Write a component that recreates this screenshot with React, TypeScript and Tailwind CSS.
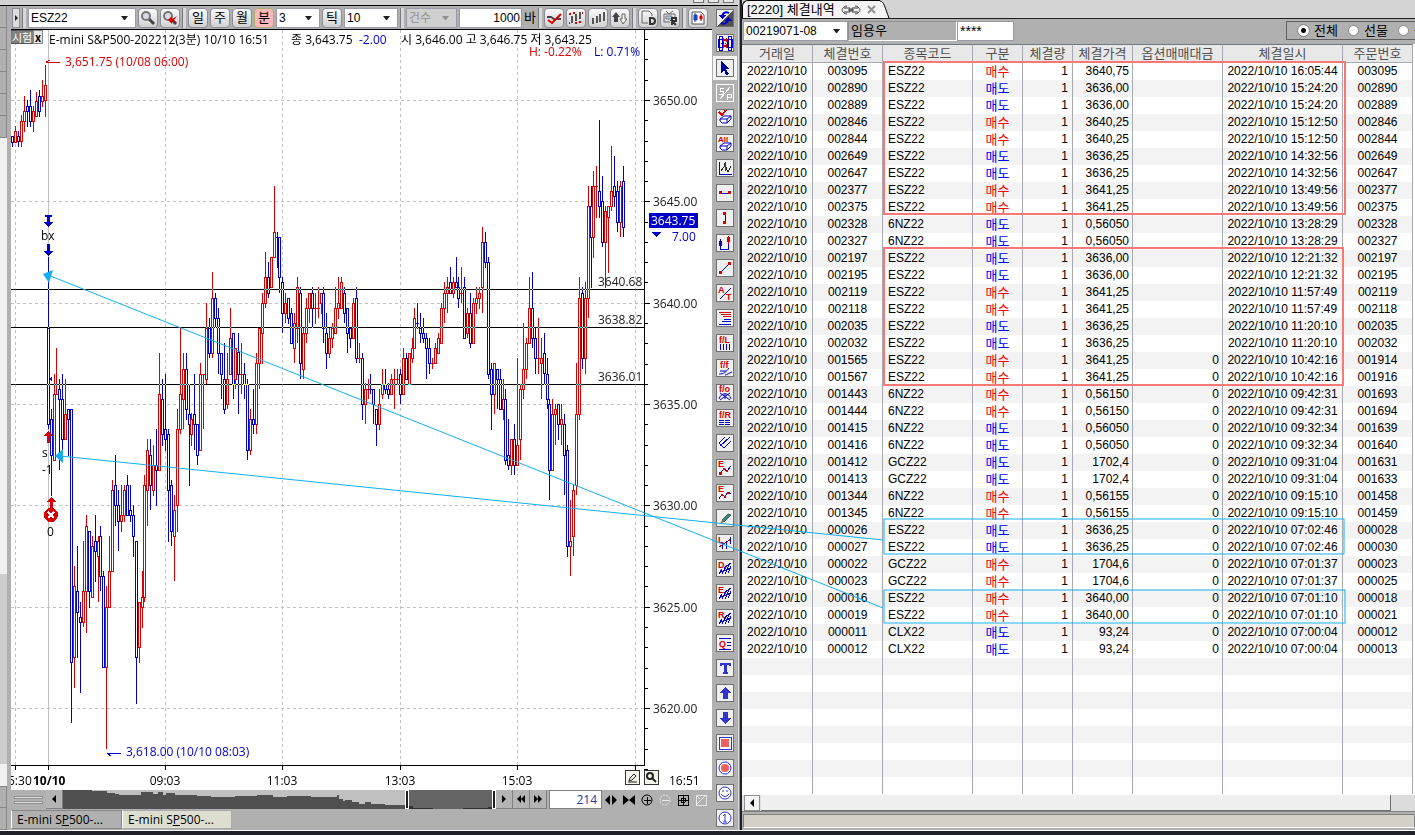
import type { ReactNode } from "react";

const UI_FONT = "font-['Open_Sans','Noto_Sans_CJK_KR',sans-serif]";
const GRID_FONT = "font-['Liberation_Sans','Noto_Sans_CJK_KR',sans-serif]";

const RED = "#d80000";
const BLUE = "#0000c8";
const CYAN = "#14aef0";

type Candle = [x: number, high: number, top: number, bottom: number, low: number, up: 0 | 1];

const candles: Candle[] = [
  [12, 136, 136, 142, 146, 0], [15, 126, 131, 142, 142, 1], [18, 131, 136, 141, 146, 0], [21, 115, 121, 141, 146, 1],
  [24, 96, 111, 121, 131, 1], [27, 100, 106, 111, 126, 0], [30, 90, 106, 121, 126, 0], [33, 106, 111, 121, 131, 1],
  [36, 92, 101, 116, 116, 1], [39, 90, 96, 111, 116, 0], [42, 80, 96, 101, 106, 1], [45, 65, 85, 100, 116, 1],
  [48, 257, 328, 424, 428, 0], [51, 409, 419, 455, 495, 0], [54, 374, 394, 460, 460, 1], [56, 348, 394, 394, 394, 1],
  [59, 379, 389, 399, 469, 0], [62, 374, 399, 439, 451, 0], [65, 379, 414, 439, 439, 1], [68, 409, 409, 419, 455, 0],
  [71, 409, 409, 662, 722, 0], [74, 566, 586, 657, 687, 1], [77, 546, 591, 612, 657, 0], [80, 602, 617, 622, 692, 0],
  [83, 541, 591, 622, 626, 1], [86, 515, 526, 591, 632, 1], [89, 531, 531, 591, 607, 0], [92, 536, 546, 597, 597, 1],
  [95, 515, 541, 551, 581, 0], [98, 536, 541, 556, 601, 1], [100, 526, 536, 576, 590, 0], [103, 571, 576, 667, 667, 0],
  [106, 586, 607, 667, 748, 1], [109, 536, 571, 607, 607, 1], [112, 480, 490, 571, 571, 1], [115, 455, 485, 505, 525, 0],
  [118, 490, 505, 521, 550, 0], [121, 485, 515, 521, 531, 1], [124, 485, 490, 515, 521, 1], [127, 475, 485, 515, 515, 0],
  [130, 485, 510, 515, 521, 0], [133, 505, 515, 536, 556, 0], [136, 541, 541, 657, 703, 0], [139, 602, 602, 647, 662, 1],
  [142, 571, 597, 607, 627, 1], [144, 475, 485, 597, 601, 1], [147, 439, 450, 490, 525, 1], [150, 439, 455, 485, 509, 0],
  [153, 445, 465, 490, 495, 1], [156, 429, 465, 470, 505, 0], [159, 353, 394, 470, 470, 1], [162, 379, 399, 434, 445, 0],
  [165, 374, 429, 439, 450, 0], [168, 429, 434, 490, 541, 0], [171, 480, 485, 531, 545, 0], [174, 495, 510, 536, 580, 1],
  [177, 409, 429, 505, 531, 1], [180, 328, 394, 429, 433, 1], [183, 353, 369, 399, 428, 1], [186, 353, 369, 409, 419, 0],
  [189, 384, 414, 424, 485, 0], [191, 413, 419, 434, 445, 1], [194, 374, 414, 424, 449, 0], [197, 424, 424, 455, 464, 0],
  [200, 363, 374, 450, 450, 1], [203, 374, 374, 374, 428, 1], [206, 303, 328, 379, 383, 1], [209, 318, 328, 353, 357, 0],
  [212, 272, 298, 353, 357, 1], [215, 293, 298, 318, 327, 0], [218, 308, 318, 353, 373, 0], [221, 353, 353, 374, 398, 0],
  [224, 343, 379, 409, 413, 0], [227, 353, 379, 404, 408, 1], [230, 308, 338, 374, 374, 1], [233, 333, 333, 384, 398, 0],
  [235, 348, 348, 379, 388, 1], [238, 333, 352, 374, 413, 0], [241, 343, 374, 374, 393, 1], [244, 363, 374, 384, 398, 0],
  [247, 379, 384, 450, 459, 0], [250, 409, 419, 450, 454, 1], [253, 389, 419, 424, 433, 0], [256, 353, 363, 424, 433, 1],
  [259, 328, 328, 363, 388, 1], [262, 293, 303, 333, 363, 1], [265, 252, 277, 303, 307, 1], [268, 262, 277, 293, 297, 0],
  [271, 257, 257, 287, 287, 1], [274, 186, 232, 257, 257, 1], [277, 232, 237, 237, 267, 0], [279, 237, 237, 277, 292, 0],
  [282, 277, 282, 313, 332, 0], [285, 293, 303, 313, 322, 1], [288, 298, 298, 318, 323, 0], [291, 308, 313, 343, 343, 0],
  [294, 313, 323, 348, 362, 1], [297, 277, 287, 328, 342, 1], [300, 287, 293, 363, 378, 0], [303, 328, 333, 369, 378, 1],
  [306, 298, 308, 333, 342, 1], [309, 293, 293, 308, 322, 1], [312, 287, 293, 308, 327, 0], [315, 293, 308, 308, 323, 1],
  [318, 287, 308, 308, 317, 1], [321, 293, 293, 303, 313, 1], [323, 287, 293, 328, 342, 0], [326, 313, 333, 353, 368, 0],
  [329, 328, 338, 353, 357, 1], [332, 323, 328, 338, 347, 1], [335, 287, 308, 333, 333, 1], [338, 277, 303, 308, 318, 1],
  [341, 277, 282, 308, 308, 1], [344, 287, 293, 313, 322, 0], [347, 308, 308, 333, 352, 0], [350, 328, 328, 338, 347, 0],
  [353, 298, 303, 338, 338, 1], [356, 287, 298, 358, 362, 0], [359, 343, 358, 358, 362, 1], [362, 353, 358, 404, 419, 0],
  [365, 383, 389, 404, 423, 1], [368, 379, 389, 389, 398, 1], [370, 374, 389, 389, 393, 0], [373, 389, 389, 404, 423, 0],
  [376, 409, 409, 424, 445, 0], [379, 389, 404, 424, 429, 1], [382, 369, 384, 394, 398, 1], [385, 369, 384, 389, 393, 0],
  [388, 383, 389, 394, 398, 0], [391, 374, 379, 394, 394, 1], [394, 369, 379, 379, 408, 1], [397, 369, 379, 379, 384, 1],
  [400, 369, 374, 394, 403, 0], [403, 348, 358, 394, 394, 1], [406, 353, 358, 379, 379, 0], [409, 353, 353, 384, 384, 1],
  [412, 338, 348, 358, 362, 1], [414, 308, 318, 348, 348, 1], [417, 303, 323, 323, 328, 0], [420, 313, 328, 333, 342, 0],
  [423, 318, 333, 338, 342, 0], [426, 333, 338, 348, 378, 0], [429, 338, 348, 363, 373, 0], [432, 358, 363, 363, 368, 1],
  [435, 343, 348, 363, 363, 1], [438, 333, 338, 353, 353, 1], [441, 303, 308, 343, 343, 1], [444, 282, 293, 308, 322, 1],
  [447, 277, 287, 293, 312, 1], [450, 267, 282, 293, 293, 0], [453, 277, 282, 293, 297, 1], [456, 257, 282, 287, 287, 0],
  [458, 277, 287, 298, 307, 0], [461, 267, 293, 293, 302, 1], [464, 277, 287, 338, 338, 0], [467, 308, 313, 333, 337, 1],
  [470, 293, 313, 343, 347, 0], [473, 298, 303, 343, 343, 1], [476, 287, 298, 303, 313, 1], [479, 287, 293, 298, 308, 1],
  [482, 227, 242, 287, 312, 1], [485, 232, 242, 262, 267, 0], [488, 257, 262, 374, 378, 0], [491, 363, 369, 394, 429, 0],
  [494, 363, 363, 394, 413, 1], [497, 369, 369, 379, 408, 0], [500, 369, 379, 409, 409, 0], [503, 379, 399, 409, 419, 1],
  [505, 389, 399, 460, 464, 0], [508, 419, 455, 465, 469, 0], [511, 439, 439, 465, 474, 1], [514, 424, 439, 465, 474, 0],
  [517, 358, 445, 465, 465, 1], [520, 384, 389, 439, 459, 1], [523, 323, 369, 389, 398, 1], [526, 338, 343, 369, 378, 1],
  [529, 277, 308, 343, 343, 1], [532, 272, 308, 338, 347, 0], [535, 328, 338, 358, 373, 0], [538, 318, 358, 358, 373, 1],
  [541, 338, 358, 363, 398, 1], [544, 333, 353, 373, 384, 0], [547, 358, 374, 399, 408, 0], [549, 399, 404, 470, 499, 0],
  [552, 399, 414, 470, 470, 1], [555, 404, 409, 414, 444, 1], [558, 404, 404, 424, 439, 0], [561, 404, 419, 424, 444, 1],
  [564, 414, 424, 455, 494, 0], [567, 445, 450, 546, 556, 0], [570, 500, 541, 546, 575, 1], [573, 485, 490, 536, 555, 1],
  [576, 363, 414, 485, 494, 1], [579, 277, 298, 414, 419, 1], [582, 287, 293, 358, 368, 0], [585, 282, 298, 358, 373, 1],
  [588, 186, 206, 298, 317, 1], [591, 186, 206, 237, 287, 0], [593, 171, 186, 237, 257, 1], [596, 166, 186, 186, 217, 1],
  [599, 120, 191, 206, 217, 0], [602, 176, 201, 242, 246, 0], [605, 206, 211, 242, 287, 1], [608, 206, 206, 217, 272, 1],
  [611, 146, 191, 206, 210, 1], [614, 156, 186, 196, 206, 0], [617, 181, 191, 222, 231, 0], [620, 181, 186, 222, 236, 1],
  [623, 166, 181, 227, 236, 0],
];

type Fill = [no: string, code: string, side: "B" | "S", price: string, option: string, time: string, order: string];

const fills: Fill[] = [
  ["003095", "ESZ22", "B", "3640,75", "", "16:05:44", "003095"],
  ["002890", "ESZ22", "S", "3636,00", "", "15:24:20", "002890"],
  ["002889", "ESZ22", "S", "3636,00", "", "15:24:20", "002889"],
  ["002846", "ESZ22", "B", "3640,25", "", "15:12:50", "002846"],
  ["002844", "ESZ22", "B", "3640,25", "", "15:12:50", "002844"],
  ["002649", "ESZ22", "S", "3636,25", "", "14:32:56", "002649"],
  ["002647", "ESZ22", "S", "3636,25", "", "14:32:56", "002647"],
  ["002377", "ESZ22", "B", "3641,25", "", "13:49:56", "002377"],
  ["002375", "ESZ22", "B", "3641,25", "", "13:49:56", "002375"],
  ["002328", "6NZ22", "S", "0,56050", "", "13:28:29", "002328"],
  ["002327", "6NZ22", "S", "0,56050", "", "13:28:29", "002327"],
  ["002197", "ESZ22", "S", "3636,00", "", "12:21:32", "002197"],
  ["002195", "ESZ22", "S", "3636,00", "", "12:21:32", "002195"],
  ["002119", "ESZ22", "B", "3641,25", "", "11:57:49", "002119"],
  ["002118", "ESZ22", "B", "3641,25", "", "11:57:49", "002118"],
  ["002035", "ESZ22", "S", "3636,25", "", "11:20:10", "002035"],
  ["002032", "ESZ22", "S", "3636,25", "", "11:20:10", "002032"],
  ["001565", "ESZ22", "B", "3641,25", "0", "10:42:16", "001914"],
  ["001567", "ESZ22", "B", "3641,25", "0", "10:42:16", "001916"],
  ["001443", "6NZ22", "B", "0,56150", "0", "09:42:31", "001693"],
  ["001444", "6NZ22", "B", "0,56150", "0", "09:42:31", "001694"],
  ["001415", "6NZ22", "S", "0,56050", "0", "09:32:34", "001639"],
  ["001416", "6NZ22", "S", "0,56050", "0", "09:32:34", "001640"],
  ["001412", "GCZ22", "S", "1702,4", "0", "09:31:04", "001631"],
  ["001413", "GCZ22", "S", "1702,4", "0", "09:31:04", "001633"],
  ["001344", "6NZ22", "B", "0,56155", "0", "09:15:10", "001458"],
  ["001345", "6NZ22", "B", "0,56155", "0", "09:15:10", "001459"],
  ["000026", "ESZ22", "S", "3636,25", "0", "07:02:46", "000028"],
  ["000027", "ESZ22", "S", "3636,25", "0", "07:02:46", "000030"],
  ["000022", "GCZ22", "B", "1704,6", "0", "07:01:37", "000023"],
  ["000023", "GCZ22", "B", "1704,6", "0", "07:01:37", "000025"],
  ["000016", "ESZ22", "B", "3640,00", "0", "07:01:10", "000018"],
  ["000019", "ESZ22", "B", "3640,00", "0", "07:01:10", "000021"],
  ["000011", "CLX22", "S", "93,24", "0", "07:00:04", "000012"],
  ["000012", "CLX22", "S", "93,24", "0", "07:00:04", "000013"],
];

const columns = ["거래일", "체결번호", "종목코드", "구분", "체결량", "체결가격", "옵션매매대금", "체결일시", "주문번호"];
const EMPTY_ROWS = 8;

function Sep() {
  return <span className="h-5 w-1 shrink-0 border-l border-[#7a7a80] bg-[#d8d8d8]" />;
}

function ToolButton({ label, active, children }: { label: string; active?: boolean; children: ReactNode }) {
  return (
    <button
      aria-label={label}
      className={`flex h-5 w-5 shrink-0 items-center justify-center rounded-sm border text-[13px] leading-none ${
        active ? "border-[#a8b070] bg-[#ffb8b8]" : "border-[#8c8c98] bg-linear-to-b from-[#fafafa] to-[#d2d2d2]"
      }`}
    >
      {children}
    </button>
  );
}

function Combo({ label, value, className, muted }: { label: string; value: string; className: string; muted?: boolean }) {
  return (
    <div className={`relative h-5 shrink-0 ${className}`}>
      <select
        aria-label={label}
        disabled={muted}
        className={`h-full w-full appearance-none border border-[#9a9aa8] pl-0.5 leading-none ${
          muted ? "bg-[#d0d0d0] text-[#909090] opacity-100" : "bg-white text-black"
        }`}
      >
        <option>{value}</option>
      </select>
      <svg className="pointer-events-none absolute top-2 right-2" width="7" height="4">
        <path d="M0 0H7L4 4H3Z" fill={muted ? "#909090" : "#202020"} />
      </svg>
    </div>
  );
}

function Magnifier({ mark }: { mark?: boolean }) {
  return (
    <svg width="16" height="16" viewBox="0 0 16 16">
      <path d="M9 9L14 14" stroke="#444" strokeWidth="3" />
      <circle cx="6" cy="6" r="4" fill="#d8dce4" stroke="#777" strokeWidth="2" />
      {mark && <path d="M6 10L10 6V9L15 6L12 10L15 13L10 11V14Z" fill="#e00000" />}
    </svg>
  );
}

function ChartToolbar() {
  return (
    <div className="flex h-[23px] items-center gap-0.5 bg-[#b0b0b0] pl-px font-['Liberation_Sans','Noto_Sans_CJK_KR',sans-serif] text-xs">
      <button aria-label="펼치기" className="flex h-5 w-2 shrink-0 items-center justify-center border border-[#8c8c98] bg-[#dcdcdc]">
        <svg width="3" height="6">
          <path d="M0 0L3 3L0 6Z" fill="#202020" />
        </svg>
      </button>
      <Sep />
      <Combo label="종목" value="ESZ22" className="w-[108px]" />
      <ToolButton label="검색">
        <Magnifier />
      </ToolButton>
      <ToolButton label="검색 해제">
        <Magnifier mark />
      </ToolButton>
      <Sep />
      <ToolButton label="일">일</ToolButton>
      <ToolButton label="주">주</ToolButton>
      <ToolButton label="월">월</ToolButton>
      <ToolButton label="분" active>
        분
      </ToolButton>
      <Combo label="분 간격" value="3" className="w-11" />
      <ToolButton label="틱">틱</ToolButton>
      <Combo label="틱 간격" value="10" className="w-[54px]" />
      <Sep />
      <Combo label="조회 기준" value="건수" className="w-[51px]" muted />
      <input aria-label="바 개수" defaultValue="1000" className="h-5 w-[63px] border border-[#9a9aa8] bg-white pr-px text-right" />
      <span className="w-3 shrink-0 text-[13px] leading-none">바</span>
      <Sep />
      <ToolButton label="추세선">
        <svg width="16" height="16" fill="none" strokeWidth="2">
          <path d="M1 7H5L8 9H15" stroke="#444" />
          <path d="M2 10L6 13L15 4" stroke="#e00000" />
        </svg>
      </ToolButton>
      <ToolButton label="바 표시">
        <svg width="16" height="16" shapeRendering="crispEdges">
          <path d="M4 6V13M8 4V11M12 2V9" stroke="#555" strokeWidth="2" />
          <path d="M1 3H3V5H1ZM5 2H7V4H5ZM7 12H9V14H7ZM11 11H13V13H11ZM14 2H15V4H14ZM1 12H2V14H1Z" fill="#e00000" />
        </svg>
      </ToolButton>
      <ToolButton label="바 차트">
        <svg width="16" height="16" shapeRendering="crispEdges">
          <path d="M3 8V14M7 6V13M10 4V12M14 2V11" stroke="#555" strokeWidth="2" />
        </svg>
      </ToolButton>
      <ToolButton label="정렬">
        <svg width="16" height="16">
          <path d="M0 7L4 2L8 7H6V12H2V7Z" fill="#444" />
          <path d="M10 4H13V9H15L11 14L8 9H10Z" fill="#f0f0f0" stroke="#666" />
        </svg>
      </ToolButton>
      <Sep />
      <ToolButton label="문서">
        <svg width="16" height="16" fill="none">
          <path d="M8 13H2V1H9L12 4V6" stroke="#666" />
          <path d="M10 8V14H12Q15 14 15 11T12 8Z" stroke="#333" strokeWidth="2" />
        </svg>
      </ToolButton>
      <ToolButton label="실시간">
        <svg width="16" height="16" fill="none">
          <path d="M4 1L7 4L11 1M8 12H2V4H13V7" stroke="#666" />
          <path d="M4 6H10V9H4Z" fill="#bcd" stroke="#678" />
          <path d="M10 15V8H14V11H10L14 15" stroke="#333" strokeWidth="2" />
        </svg>
      </ToolButton>
      <Sep />
      <ToolButton label="캔들">
        <svg width="16" height="16">
          <path d="M2 2H11L14 5V14H2Z" fill="#fff" stroke="#555" />
          <path d="M5 3V12M4 5H7V10H4Z" stroke="#2040d0" fill="#2040d0" />
          <path d="M11 4V11M10 6H12V9H10Z" stroke="#e00000" fill="#e00000" />
        </svg>
      </ToolButton>
    </div>
  );
}

function Glyph({ x, y, children, color = RED, size = 9 }: { x: number; y: number; children: string; color?: string; size?: number }) {
  return (
    <text x={x} y={y} fill={color} fontSize={size} fontWeight="bold" fontFamily="Liberation Sans, sans-serif">
      {children}
    </text>
  );
}

function Hatch({ letter }: { letter: string }) {
  return (
    <>
      <path d="M2 14L5 9M5 14L10 5M8 14L13 3M11 13L14 6M2 13L14 8M7 8L14 3" stroke={BLUE} />
      <Glyph x={1} y={8}>{letter}</Glyph>
    </>
  );
}

const eraser = <path d="M3 9L7 6H14V9L10 13H5L3 11ZM3 9H10V13M10 9L14 6" fill="#fff" stroke={BLUE} shapeRendering="auto" />;
const ARROW = "#3434cc";

const drawTools: [string, ReactNode][] = [
  ["새로고침", <><path d="M16 0V16H0Z" fill="#505050" /><path d="M12 3C8 1 5 4 5 7M4 13C8 15 11 12 11 9" stroke={BLUE} strokeWidth="2" fill="none" shapeRendering="auto" /><path d="M1 5H9L5 9ZM7 11H15L11 7Z" fill={BLUE} /></>],
  ["창 연동", <><path d="M2 1H5V15H2ZM11 1H14V15H11ZM1 4H6V12H1ZM10 4H15V12H10Z" fill="none" stroke={BLUE} /><path d="M4 8H12" stroke={BLUE} strokeDasharray="1 1" /><path d="M6 3L9 5L6 7ZM10 3L7 5L10 7ZM6 9L9 11L6 13ZM10 9L7 11L10 13Z" fill={RED} /></>],
  ["선택", <path d="M4 1V13L7 10L9 15L12 14L9 9H13Z" fill="#0000a0" />],
  ["S/P", <><path d="M13 2L3 14M7 3H3V6H6V9H2M10 15V9H14V12H10" stroke="#fff" fill="none" /></>],
  ["지우기", <>{eraser}<path d="M2 2L5 5L9 0" stroke={RED} strokeWidth="2" fill="none" /></>],
  ["전체 지우기", <><g transform="translate(0 2)">{eraser}</g><Glyph x={1} y={7} size={8}>All</Glyph></>],
  ["축", <><path d="M2 2V14H15" stroke={BLUE} fill="none" /><path d="M4 11L7 7V3L11 12L14 6" stroke="#222" fill="none" /><path d="M8 2V11" stroke={RED} /></>],
  ["수평선", <><path d="M3 8H13" stroke={BLUE} /><path d="M2 6H5V9H2ZM11 6H14V9H11Z" fill={RED} /></>],
  ["수직선", <><path d="M8 3V13" stroke={BLUE} /><path d="M6 2H9V5H6ZM6 11H9V14H6Z" fill={RED} /></>],
  ["바 간격", <><path d="M2 6H5V11H2Z" fill={BLUE} /><path d="M3 4V14H11V9" stroke={BLUE} fill="none" /><path d="M10 2H13V7H10ZM11 1H12V9H11Z" fill={RED} /></>],
  ["추세선", <><path d="M4 12L12 4" stroke={BLUE} /><path d="M2 11H5V14H2ZM11 2H14V5H11Z" fill={RED} /></>],
  ["A/T", <><path d="M3 14L14 3" stroke={BLUE} /><Glyph x={1} y={8}>A</Glyph><Glyph x={9} y={15}>T</Glyph></>],
  ["조정대", <><path d="M2 2H14M4 4H14M6 6H14" stroke={RED} /><path d="M7 9H14M5 11H14M2 14H14" stroke={BLUE} /></>],
  ["피보나치 라인", <><Glyph x={2} y={8}>f/L</Glyph><path d="M3 9V15M6 9V15M9 9V15M12 9V15" stroke={BLUE} /></>],
  ["피보나치 팬", <><Glyph x={3} y={8}>f/f</Glyph><path d="M2 14C7 14 9 12 12 8M3 11H9M8 15C10 15 12 13 15 12" stroke={BLUE} fill="none" shapeRendering="auto" /></>],
  ["피보나치 아크", <><Glyph x={2} y={7}>f/o</Glyph><path d="M2 14C4 7 12 7 14 14M8 9V14M3 8L13 15M13 8L3 15" stroke={BLUE} fill="none" shapeRendering="auto" /></>],
  ["피보나치 되돌림", <><Glyph x={2} y={8}>f/R</Glyph><path d="M2 10H14M2 12H14M2 14H14" stroke={BLUE} strokeDasharray="5 1" /></>],
  ["채널", <path d="M2 8L8 2M3 11L13 2M7 13L14 6M2 8L7 13" stroke={BLUE} fill="none" />],
  ["엘리엇", <><Glyph x={1} y={7}>E</Glyph><path d="M3 13L7 9L10 11L14 6" stroke={BLUE} fill="none" /><path d="M2 12H5V15H2ZM6 8H8V10H6ZM9 10H11V12H9Z" fill={RED} /></>],
  ["엘리엇 파동", <><Glyph x={1} y={7}>E</Glyph><path d="M2 14L5 9L8 12L11 7L14 9" stroke={BLUE} fill="none" /><path d="M4 9H6V11H4ZM7 11H9V13H7ZM10 7H12V9H10Z" fill={RED} /></>],
  ["펜", <g shapeRendering="auto"><path d="M5 10L11 4L14 5L7 12Z" fill="#2f8f88" stroke="#555" /><path d="M3 14L5 10L7 12Z" fill="#a08040" /></g>],
  ["선형회귀", <><Glyph x={1} y={8}>L</Glyph><path d="M2 12L14 4" stroke={RED} /><path d="M5 8V14M9 6V14M13 2V9" stroke={BLUE} /></>],
  ["D 채널", <Hatch letter="D" />],
  ["E 채널", <Hatch letter="E" />],
  ["R 채널", <Hatch letter="R" />],
  ["Q 라인", <><path d="M2 3H14M2 14H14M10 7H14M10 10H14" stroke={BLUE} /><Glyph x={2} y={12}>Q</Glyph></>],
  ["텍스트", <path d="M3 3H14V6H12V5H10V12H11V14H6V12H7V5H5V6H3Z" fill={ARROW} />],
  ["위 화살표", <path d="M8 2L14 8H11V14H6V8H2Z" fill={ARROW} />],
  ["아래 화살표", <path d="M8 14L14 8H11V2H6V8H2Z" fill={ARROW} />],
  ["사각형", <><rect x="2" y="2" width="12" height="12" fill="#fff" stroke={ARROW} /><rect x="4" y="4" width="8" height="8" fill="#f06060" /></>],
  ["원", <g shapeRendering="auto"><circle cx="8" cy="8" r="6" fill="#fff" stroke={ARROW} /><circle cx="8" cy="8" r="4" fill="#f06060" /></g>],
  ["스마일", <g shapeRendering="auto"><circle cx="8" cy="8" r="6" fill="#fff" stroke={ARROW} /><path d="M5 6H7M9 6H11M4 9Q8 14 12 9" stroke={ARROW} fill="none" /></g>],
  ["번호", <g shapeRendering="auto"><circle cx="8" cy="8" r="6" fill="#fff" stroke={ARROW} /><path d="M6 6L8 4V12M6 12H10" stroke={ARROW} fill="none" /></g>],
];

function DrawToolbar() {
  return (
    <div className="flex w-[26px] shrink-0 flex-col items-center gap-[7px] bg-[#b0b0b0] pt-[3px]">
      {drawTools.map(([label, icon], i) => (
        <button
          key={label}
          aria-label={label}
          className={`h-[18px] w-[18px] shrink-0 border ${
            i === 3 ? "border-white bg-[#b0b0b0]" : "border-[#707070] bg-[#f0f0f0]"
          } ${i === 2 ? "outline-3 outline-[#f4f4f4]" : ""}`}
        >
          <svg className="block" width="16" height="16" viewBox="0 0 16 16" shapeRendering="crispEdges">
            {icon}
          </svg>
        </button>
      ))}
    </div>
  );
}

function PriceChart() {
  const ticks = Array.from({ length: 37 }, (_, i) => 3653 - i);
  const priceY = (p: number) => Math.round(100 + (3650 - p) * 20.27);
  const times: [number, string][] = [[165, "09:03"], [282, "11:03"], [400, "13:03"], [517, "15:03"]];
  const levels: [number, string][] = [[289, "3640.68"], [327, "3638.82"], [384, "3636.01"]];

  return (
    <svg className={`isolate h-full w-full bg-white text-xs ${UI_FONT}`} shapeRendering="crispEdges">
      <g transform="translate(-11 -30)">
        <rect x="11" y="30" width="701" height="760" fill="#fff" />
        <rect x="48" y="30" width="1" height="735" fill="#c0c0c0" />
        <g stroke="#c0c0c0" strokeDasharray="3 3">
          {[3650, 3645, 3640, 3635, 3630, 3625, 3620].map((p) => (
            <line key={p} x1="11" x2="644" y1={priceY(p)} y2={priceY(p)} />
          ))}
          {[15, 165, 282, 400, 517, 635].map((x) => (
            <line key={x} x1={x} x2={x} y1="30" y2="765" />
          ))}
        </g>

        {candles.map(([x, high, top, bottom, low, up]) => (
          <g key={x} fill={up ? RED : BLUE}>
            <rect x={x} y={high} width="1" height={low - high + 1} />
            <rect x={x - 1} y={top} width="3" height={bottom - top + 1} />
            {bottom - top > 1 && <rect x={x} y={top + 1} width="1" height={bottom - top - 1} fill="#fff" />}
          </g>
        ))}

        {/* levels invert whatever they cross */}
        {levels.map(([y, label]) => (
          <g key={y}>
            <rect x="11" y={y} width="633" height="1" fill="#fff" className="mix-blend-difference" />
            <text x="598" y={y - 3} fill="#202020">{label}</text>
          </g>
        ))}

        <rect x="644" y="30" width="1" height="736" />
        <rect x="11" y="765" width="634" height="1" />
        {ticks.map((p) => (
          <rect key={p} x="644" y={priceY(p)} width={p % 5 ? 4 : 6} height="1" />
        ))}
        {[3650, 3645, 3640, 3635, 3630, 3625, 3620].map((p) => (
          <text key={p} x="653" y={priceY(p) + 5} fill="#202020">{p}.00</text>
        ))}
        <rect x="649" y="213" width="49" height="15" fill={BLUE} />
        <text x="651" y="225" fill="#fff">3643.75</text>
        <path d="M651 232H661L656 237Z" fill={BLUE} />
        <text x="672" y="241" fill={BLUE}>7.00</text>

        {[15, 48, 165, 282, 400, 517, 635].map((x) => (
          <rect key={x} x={x} y="765" width="1" height="5" />
        ))}
        <text x="8" y="785">5:30</text>
        <text x="33" y="785" fontWeight="bold">10/10</text>
        {times.map(([x, t]) => (
          <text key={t} x={x} y="785" textAnchor="middle">{t}</text>
        ))}
        <text x="669" y="785">16:51</text>

        <text x="49" y="44">E-mini S&amp;P500-202212(3분) 10/10 16:51</text>
        <text x="291" y="44">종 3,643.75</text>
        <text x="359" y="44" fill={BLUE}>-2.00</text>
        <text x="401" y="44">시 3,646.00 고 3,646.75 저 3,643.25</text>
        <text x="529" y="56" fill={RED}>H: -0.22%</text>
        <text x="594" y="56" fill={BLUE}>L: 0.71%</text>

        <path d="M46 62H60M46 62L50 60" stroke={RED} fill="none" />
        <text x="65" y="66" fill={RED}>3,651.75 (10/08 06:00)</text>
        <path d="M107 753H121M107 753L111 756" stroke={BLUE} fill="none" />
        <text x="126" y="756" fill={BLUE}>3,618.00 (10/10 08:03)</text>

        <g fill={BLUE}>
          <path d="M45 215H52V217H50V222H53L48 227L44 222H47V217H45Z" />
          <path d="M47 244H50V251H53L48 256L44 251H47Z" />
          <path d="M49 379L52 377V382Z" />
        </g>
        <g fill={RED}>
          <path d="M48 431L53 436H50V443H47V436H44Z" />
          <path d="M51 497L56 502H53V509H50V502H47Z" />
          <circle cx="51" cy="515" r="7" />
        </g>
        <path d="M48 512L54 518M54 512L48 518" stroke="#fff" strokeWidth="2" />
        <text x="41" y="240">bx</text>
        <text x="42" y="457">s</text>
        <text x="42" y="474">-1</text>
        <text x="47" y="536">0</text>
      </g>
    </svg>
  );
}

function SmallButton({ label, d }: { label: string; d: string }) {
  return (
    <button aria-label={label} className="flex h-[19px] w-[17px] shrink-0 items-center justify-center border-r border-b border-[#808080] bg-[#b4b4b4]">
      <svg width="10" height="8">
        <path d={d} fill="#000" />
      </svg>
    </button>
  );
}

function ZoomButton({ label, muted, children }: { label: string; muted?: boolean; children: ReactNode }) {
  return (
    <button aria-label={label} className="h-3.5 w-[18px] shrink-0">
      <svg className="block" width="14" height="14" fill="none" stroke={muted ? "#e8e8e8" : "#000"}>
        {children}
      </svg>
    </button>
  );
}

function ChartScroller() {
  return (
    <div className="flex h-5 shrink-0 items-start bg-[#b0b0b0]">
      <div className="flex w-[35px] shrink-0 flex-col gap-0.5 px-[3px] pt-1.5">
        <span className="h-[3px] border border-[#909090] bg-[#dcdcdc]" />
        <span className="h-[3px] border border-[#909090] bg-[#dcdcdc]" />
      </div>
      <SmallButton label="이전" d="M7 0L3 4L7 8Z" />
      <svg className="h-[19px] min-w-0 flex-1" viewBox="0 0 433 19" preserveAspectRatio="none" shapeRendering="crispEdges">
        <rect width="433" height="19" fill="#c0c0c0" />
        <path
          d="M0 0H28L30 1H44V3H50L58 5H78V2H90V4H95V2H100V5H103V3H112V5H134V6H148V7H172V6H194V5H210V7H224V6H248V7H274V5H276V9H280V11H282V10H289V12H296V14H302V12H308V14H322V15H346V16H366V17H378V19H0Z"
          fill="#505050"
        />
        <rect x="345" width="87" height="19" fill="#646464" />
        <path d="M345 16H350V18H370V19H345ZM400 18H432V19H400ZM425 17H432V18H425Z" fill="#303030" />
        <rect x="342" width="4" height="19" fill="#fff" />
        <rect x="343" y="1" width="2" height="17" fill="#202020" />
        <rect x="429" width="4" height="19" fill="#fff" />
        <rect x="430" y="1" width="2" height="17" fill="#202020" />
      </svg>
      <SmallButton label="다음" d="M3 0L7 4L3 8Z" />
      <SmallButton label="빠르게 이전" d="M5 0L1 4L5 8ZM9 0L5 4L9 8Z" />
      <SmallButton label="빠르게 다음" d="M1 0L5 4L1 8ZM5 0L9 4L5 8Z" />
      <input
        aria-label="표시 개수"
        defaultValue="214"
        className={`ml-0.5 h-[19px] w-[53px] shrink-0 border border-[#808080] bg-white pr-1 text-right text-xs text-[#2040a0] ${UI_FONT}`}
      />
      <div className="flex w-[110px] shrink-0 items-center pt-[3px] pl-0.5">
        <ZoomButton label="넓게">
          <path d="M6 2V12L1 7ZM8 2V12L13 7Z" fill="#000" stroke="none" />
        </ZoomButton>
        <ZoomButton label="좁게">
          <path d="M1 2V12L7 7ZM13 2V12L7 7Z" fill="#000" stroke="none" />
        </ZoomButton>
        <ZoomButton label="확대">
          <circle cx="7" cy="7" r="5" />
          <path d="M4 7H11M7 4V11" shapeRendering="crispEdges" />
        </ZoomButton>
        <ZoomButton label="축소" muted>
          <circle cx="7" cy="7" r="5" strokeDasharray="2 1" />
          <path d="M4 7H11" shapeRendering="crispEdges" />
        </ZoomButton>
        <ZoomButton label="전체">
          <path d="M2 2H12V12H2ZM2 7H12M7 2V12M5 5V9M9 5V9M5 5H9M5 9H9" shapeRendering="crispEdges" />
        </ZoomButton>
        <ZoomButton label="초기화" muted>
          <path d="M2 2H12V12H2ZM3 11L11 3M3 3L6 6" shapeRendering="crispEdges" />
        </ZoomButton>
      </div>
    </div>
  );
}

function ChartWindow() {
  return (
    <div className="flex w-[738px] shrink-0 flex-col">
      <div className="flex h-[6px] shrink-0 justify-end gap-1 border-b border-black bg-[#d4d4d4] pr-1">
        <span className="h-[3px] w-[11px] border border-t-0 border-[#707070] bg-[#e8e8e8]" />
        <span className="h-[3px] w-[11px] border border-t-0 border-[#707070] bg-[#e8e8e8]" />
        <span className="h-[3px] w-[11px] border border-t-0 border-[#707070] bg-[#e8e8e8]" />
      </div>
      <div className="flex min-h-0 flex-1">
        <div className="flex w-[11px] shrink-0 flex-col bg-[#b0b0b0] pr-1">
          {[0, 1, 2, 3, 4, 5].map((i) => (
            <span key={i} className="h-[22px] shrink-0 border-r border-b border-[#888]" />
          ))}
          <span className="flex-3 bg-[#f0f0f0]" />
          <span className="h-[190px] shrink-0 bg-[#cdcdcd]" />
          <span className="h-[22px] shrink-0 bg-[#f0f0f0]" />
          <span className="h-[22px] shrink-0 border-t border-r border-b border-[#888]" />
          <span className="h-[22px] shrink-0 border-r border-b border-[#888]" />
        </div>
        <div className="flex min-w-0 flex-1 flex-col bg-[#b0b0b0]">
          <ChartToolbar />
          <div className="relative min-h-0 flex-1 overflow-hidden border-t border-black bg-white">
            <PriceChart />
            <div className="absolute top-0 left-0 flex h-3.5 font-['Noto_Sans_CJK_KR',sans-serif] text-[11px] leading-[13px]">
              <span className="w-[22px] border-y border-[#555] bg-[#808080] text-center whitespace-nowrap text-white">시험</span>
              <button aria-label="닫기" className="flex w-[10px] items-center justify-center border border-[#888] bg-[#e8e8e8] font-bold">
                x
              </button>
            </div>
            <div className="absolute right-[53px] bottom-[5px] flex gap-1">
              <button aria-label="편집" className="h-[15px] w-[15px] border border-[#333] bg-[#f4f4e8]">
                <svg className="block" width="13" height="13" fill="none" stroke="#222">
                  <path d="M3 10L4 7L8 3L10 5L6 9ZM2 11H11" />
                </svg>
              </button>
              <button aria-label="찾기" className="h-[15px] w-[15px] border border-[#333] bg-[#f4f4e8]">
                <svg className="block" width="13" height="13" fill="none" stroke="#222">
                  <circle cx="5" cy="5" r="3" strokeWidth="2" />
                  <path d="M7 7L11 11" strokeWidth="2" />
                </svg>
              </button>
            </div>
          </div>
          <ChartScroller />
          <div className={`flex h-5 shrink-0 text-xs ${UI_FONT}`}>
            <button className="h-[19px] w-[111px] border border-[#888] border-l-white bg-[#b0b0b0] pl-[5px] text-left leading-4">
              E-mini S<u>P</u>500-...
            </button>
            <button className="h-[19px] w-[110px] border border-[#aaa] border-l-white bg-[#deded0] pl-[5px] text-left leading-4">
              E-mini S<u>P</u>500-...
            </button>
          </div>
        </div>
        <DrawToolbar />
      </div>
    </div>
  );
}

function FilterRadio({ label, checked }: { label: string; checked?: boolean }) {
  return (
    <label className="flex w-[50px] shrink-0 items-center gap-[5px] whitespace-nowrap">
      <input
        type="radio"
        name="kind"
        defaultChecked={checked}
        className="h-[11px] w-[11px] appearance-none rounded-full border border-[#888] bg-white checked:border-3 checked:border-white checked:bg-black checked:outline checked:outline-[#888]"
      />
      {label}
    </label>
  );
}

function FillsTable() {
  const cell = "overflow-hidden whitespace-nowrap border-r border-[#a8a8b0] p-0";
  return (
    <table className={`w-[671px] table-fixed border-separate border-spacing-0 bg-white text-xs leading-[17px] ${GRID_FONT}`}>
      <colgroup>
        <col className="w-[71px]" />
        <col className="w-[70px]" />
        <col className="w-[90px]" />
        <col className="w-[50px]" />
        <col className="w-[50px]" />
        <col className="w-[60px]" />
        <col className="w-[90px]" />
        <col className="w-[120px]" />
        <col className="w-[70px]" />
      </colgroup>
      <thead>
        <tr className="h-[19px] bg-[#e8e8e8] text-[13px] text-[#505050]">
          {columns.map((c) => (
            <th key={c} className={`${cell} border-t border-b border-t-[#707880] font-normal`}>{c}</th>
          ))}
        </tr>
      </thead>
      <tbody>
        {fills.map(([no, code, side, price, option, time, order]) => (
          <tr key={no} className="h-[17px] even:bg-[#f3f3f3]">
            <td className={`${cell} text-center`}>2022/10/10</td>
            <td className={`${cell} text-center`}>{no}</td>
            <td className={`${cell} pl-[5px]`}>{code}</td>
            <td className={`${cell} text-center text-[13px] ${side === "B" ? "text-[#ff0000]" : "text-[#0000ff]"}`}>
              {side === "B" ? "매수" : "매도"}
            </td>
            <td className={`${cell} pr-1 text-right`}>1</td>
            <td className={`${cell} pr-[3px] text-right`}>{price}</td>
            <td className={`${cell} pr-[3px] text-right`}>{option}</td>
            <td className={`${cell} text-center`}>2022/10/10 {time}</td>
            <td className={`${cell} text-center`}>{order}</td>
          </tr>
        ))}
        {Array.from({ length: EMPTY_ROWS }, (_, i) => (
          <tr key={i} className="h-[17px] even:bg-[#f3f3f3]">
            {columns.map((c) => (
              <td key={c} className={cell} />
            ))}
          </tr>
        ))}
      </tbody>
    </table>
  );
}

function FillsWindow() {
  return (
    <div className={`flex min-w-0 flex-1 flex-col overflow-hidden bg-[#b0b0b0] text-xs ${GRID_FONT}`}>
      <div className="flex h-[19px] shrink-0 items-end border-b border-[#202020] bg-[#d4d4d4]">
        <div className="flex h-[18px] w-[138px] shrink-0 items-center gap-1.5 rounded-tl-md border-t border-l border-black bg-[#f4f4f4] pl-1 text-[13px] whitespace-nowrap">
          <span>[2220] 체결내역</span>
          <svg width="20" height="10" fill="none" stroke="#333">
            <path d="M6 1C2 1 1 5 1 5S2 9 6 9M3 3H9V7H3M14 1C18 1 19 5 19 5S18 9 14 9M17 3H11V7H17M7 5H13" />
          </svg>
          <button aria-label="탭 닫기">
            <svg width="9" height="9" stroke="#909090" strokeWidth="2">
              <path d="M1 1L8 8M8 1L1 8" />
            </svg>
          </button>
        </div>
        <svg width="10" height="18" className="shrink-0">
          <path d="M0 0C4 0 5 8 9 18H0Z" fill="#f4f4f4" />
          <path d="M0 1C4 1 5 8 9 18" fill="none" stroke="#000" />
        </svg>
      </div>
      <div className="flex h-[25px] shrink-0 items-start pt-0.5 pl-px">
        <Combo label="계좌번호" value="00219071-08" className="w-[105px]" />
        <span className="h-5 w-[109px] shrink-0 border border-[#909090] border-r-white border-b-white pl-0.5 text-[13px] leading-[17px]">임용우</span>
        <input
          aria-label="비밀번호"
          defaultValue="****"
          className="h-5 w-[57px] shrink-0 border border-[#9a9aa8] bg-white pl-0.5 text-sm"
        />
        <fieldset className="ml-auto h-[19px] w-[129px] min-w-0 shrink-0 overflow-hidden border border-r-0 border-[#606060] pl-[11px] text-[13px] leading-[17px]">
          <div className="flex">
            <FilterRadio label="전체" checked />
            <FilterRadio label="선물" />
            <FilterRadio label="옵션" />
          </div>
        </fieldset>
      </div>
      <div className="min-h-0 flex-1 overflow-hidden bg-white">
        <FillsTable />
      </div>
      <div className="flex h-[17px] shrink-0 border-b border-[#808080] bg-[#e0e0e0] pl-0.5">
        <button aria-label="왼쪽으로" className="flex w-4 items-center justify-center border border-[#909090] bg-[#f4f4f4]">
          <svg width="4" height="8">
            <path d="M4 0V8L0 4Z" />
          </svg>
        </button>
        <span className="ml-px flex-1 border-r border-b border-[#707070] bg-[#f0f0f0]" />
        <span className="w-6 bg-[#dcdcdc]" />
      </div>
      <div className="mt-0.5 mb-0.5 ml-px h-[14px] shrink-0 border border-[#808080] border-b-white bg-[#d4d0c8]" />
    </div>
  );
}

function Annotations() {
  return (
    <svg className="pointer-events-none absolute inset-0 h-full w-full" fill="none">
      <g stroke="#f87878" strokeWidth="2">
        <rect x="884" y="62" width="461" height="152" />
        <rect x="884" y="248" width="459" height="137" />
      </g>
      <g stroke={CYAN}>
        <rect x="884" y="519" width="460" height="35" />
        <rect x="884" y="590" width="461" height="33" />
        <path d="M48 275L883 608M60 456L883 540" />
      </g>
      <path d="M43 274L53 270L49 283ZM55 456L63 449V463Z" fill={CYAN} />
    </svg>
  );
}

export default function App() {
  return (
    <div className="relative flex h-screen w-full flex-col overflow-hidden bg-[#b0b0b0] text-black">
      <div className="flex min-h-0 flex-1">
        <ChartWindow />
        <div className="w-1 shrink-0 border-r-2 border-l border-l-[#d8d8d8] border-r-[#202028] bg-[#909090]" />
        <FillsWindow />
      </div>
      <div className="h-[5px] shrink-0 border-t border-white bg-[#202028]" />
      <Annotations />
    </div>
  );
}
